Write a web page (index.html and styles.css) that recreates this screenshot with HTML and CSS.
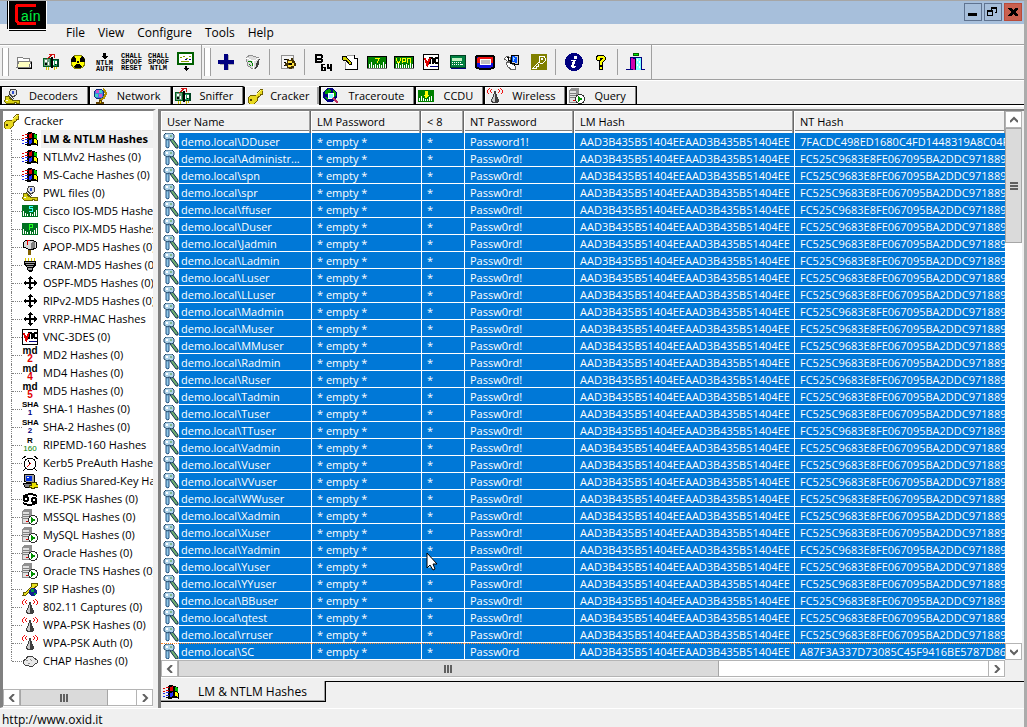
FILE: index.html
```html
<!DOCTYPE html>
<html lang="en">
<head>
<meta charset="UTF-8">
<meta name="viewport" content="width=device-width, initial-scale=1.0">
<title>Cain</title>
<link rel="stylesheet" href="styles.css">
</head>
<body>

<svg class="sprite" aria-hidden="true">
  <symbol id="i-folder" viewBox="0 0 16 16"><path d="M1 13V4l1-1h4l1 1h6v3h2l1 6z" fill="#fff" stroke="#808080"/><path d="M3 7h12l-2 6H1z" fill="#ffffc0" stroke="#808080"/><path d="M2 14h13V8" fill="none" stroke="#000"/></symbol>
  <symbol id="i-sniffer" viewBox="0 0 16 16"><path d="M0 4h8v9H0z" fill="#006020"/><path d="M8 5h8v8H8z" fill="#004020"/><path d="M1 5h6v7H1z" fill="#70a080"/><path d="M9 6h5v6H9z" fill="#20a060"/><path d="M2 6h2v2H2zM5 8h1v3H5zM10 7h1v4h-1zM12 7h2v3h-2z" fill="#fff"/><path d="M2 9h2v2H2zM12 10h1v1h-1z"/><path d="M8 3h2v11H8z"/><path d="M3 13h1v3H3zM5 13h1v3H5zM11 13h1v3h-1zM13 13h1v2h-1z" fill="#d0c000"/><path d="M4 5l6-5M6 0h5v4" fill="none" stroke="#d01010" stroke-width="1"/></symbol>
  <symbol id="i-nuke" viewBox="0 0 16 16"><circle cx="8" cy="8" r="7" fill="#ff0" stroke="#808000"/><path d="M8 8L4 13q4 3 8 0zM8 8l7 0q0-4-3-6zM8 8H1q0-4 3-6z" fill="#000"/><circle cx="8" cy="8" r="2" fill="#000" stroke="#ff0"/></symbol>
  <symbol id="i-export" viewBox="0 0 18 20"><path d="M1 1h15v11H1z" fill="#fff" stroke="#006000" stroke-width="2"/><path d="M3 5h2M6 4h2M9 6h2M12 4h2M4 9h8" stroke="#80a000"/><path d="M8 7h2M12 7h2" stroke="#000080"/><path d="M8 14h2v2h2l-3 3-3-3h2z"/></symbol>
  <symbol id="i-plus" viewBox="0 0 16 16"><path d="M7 1h4v6h5v4h-5v5H7v-5H2V7h5z" fill="#b0b0b0"/><path d="M6 0h4v6h6v4h-6v6H6v-6H0V6h6z" fill="#000080"/></symbol>
  <symbol id="i-bin" viewBox="0 0 16 16"><path d="M1 4l4-3 9 3-2 9-4 2-5-3z" fill="#dcdcdc" stroke="#909090"/><path d="M1 4l8 3 5-3M9 7l-1 8" fill="none" stroke="#fff"/><path d="M12 7l3-3-2 9-3 2z" fill="#404040"/><path d="M3 8l3-1 1 2M8 9l-1 3M6 12L4 10" fill="none" stroke="#008000"/></symbol>
  <symbol id="i-report" viewBox="0 0 16 16"><path d="M1 1h12v13H1z" fill="#f4f4f4" stroke="#909090"/><path d="M4 5h3M4 8h2M4 11h2" stroke="#000"/><path d="M7 5h2v1h2V4h2v2l2 1v2h1v3h-2v2h-2v1H9v-1H7v-2H5V9h2z" fill="#403000"/><path d="M8 7h4v2h2v3h-3v1H8v-2h1z" fill="#ffe040"/><path d="M9 9h3v2H9z"/></symbol>
  <symbol id="i-b64" viewBox="0 0 18 18"><path d="M1 1h7v1h1v3H8v1h1v3H8v1H1zM3 3v2h4V3zM3 7v1h4V7z" fill-rule="evenodd"/><path d="M7 11h4v1H9v2h3v4H7zM9 15v2h1v-2zM13 11h2v3h1v-3h2v7h-2v-2h-3z" fill-rule="evenodd"/></symbol>
  <symbol id="i-keydoc" viewBox="0 0 16 16"><path d="M4 1h8l3 3v12H3V8z" fill="#fff"/><path d="M5 1h7M3 8v7" stroke="#a0a0a0"/><path d="M12 1v3h3v11H3" fill="none" stroke="#000"/><path d="M0 2h4l1 2 4 4v2H7L4 6H1z" fill="#d0d000" stroke="#000"/></symbol>
  <symbol id="i-vu" viewBox="0 0 20 13"><path d="M0 0h20v13H0z"/><path d="M1 1h18v11H1z" fill="#008000"/><path d="M2 12V8h1v4zM4 12V6h1v6zM6 12V9h1v3zM8 12V8h1v4zM10 12V9h1v3zM12 12V8h1v4zM14 12V9h1v3zM16 12V6h1v6zM18 12V8h1v4z" fill="#fff"/></symbol>
  <symbol id="i-cisco7" viewBox="0 0 20 13"><use href="#i-vu"/><path d="M8 2h5v1h-1v2h-1v2h-1V5h1V3H8z" fill="#ff0"/></symbol>
  <symbol id="i-vpn" viewBox="0 0 20 13"><use href="#i-vu"/><path d="M2 2h1v3h1v1h1V5h1V2h1v3H6v2H3V5H2zM8 7V2h4v4H9v1zM9 3v2h2V3zM13 7V2h4v5h-1V3h-2v4z" fill="#ff0" fill-rule="evenodd"/></symbol>
  <symbol id="i-ccdu" viewBox="0 0 16 13"><path d="M0 0h16v12H0z" fill="#008000"/><path d="M1 11V8h1v3zM3 11V6h1v5zM5 11V8h1v3zM7 11V9h1v2zM9 11V9h1v2zM11 11V7h1v4zM13 11V6h1v5z" fill="#fff"/><path d="M7 1h3v4h2L8 9 5 5h2z" fill="#ff0"/></symbol>
  <symbol id="i-vnc" viewBox="0 0 16 16"><path d="M0 0h16v16H0z"/><path d="M1 1h14v14H1z" fill="#fff"/><path d="M7 3h3v1h1v6H9V5H8v5H6V3zM12 3h3v2h-2v3h2v2h-3l-1-1V4z"/><path d="M1 4h2l1 4 2-4h2l-3 9H4z" fill="#e00000"/><path d="M7 12h8v1H7z" fill="#000080"/></symbol>
  <symbol id="i-calc" viewBox="0 0 16 13"><path d="M1 1h15v12H1z" fill="#000080"/><path d="M0 0h15v12H0z" fill="#008040" stroke="#004020"/><path d="M2 2h10v3H2z" fill="#c0f0c0"/><path d="M2 7h1M4 7h1M6 7h1M8 7h1M10 7h1M2 9h1M4 9h1M6 9h1M8 9h1M10 9h3" stroke="#fff"/></symbol>
  <symbol id="i-token" viewBox="0 0 20 15"><rect width="20" height="15" rx="4"/><rect x="2" y="2" width="16" height="11" rx="2" fill="#1010e0"/><path d="M2 8V4l2-2h13l1 2v4z" fill="#f01010"/><path d="M5 5h10v5H5z" fill="#c0c0c0" stroke="#fff"/></symbol>
  <symbol id="i-radius" viewBox="0 0 16 16"><path d="M2 1h8l2 1v7H4L2 8z" fill="#a0a0a0" stroke="#000"/><path d="M4 3h6v5H4z" fill="#0030e0"/><path d="M5 4h2v1H5z" fill="#fff"/><path d="M1 10h10l2 4H3z" fill="#808080" stroke="#000"/><path d="M9 9h5v2h2v3h-4v1H9v-1H7v-2h2z" fill="#e8e000" stroke="#404000"/></symbol>
  <symbol id="i-pc" viewBox="0 0 16 16"><path d="M7 1l8 1-1 9-7-1z" fill="#d0d0d0" stroke="#000"/><path d="M8 2l5 1v6l-5-1z" fill="#0050ff"/><path d="M9 3l2 1-1 3H9z" fill="#a0e0ff"/><path d="M0 5l3-3 4 2-2 4zM2 9l4-1 5 4 1 3-4 1-4-3z" fill="#fff" stroke="#606060"/><path d="M3 3h1v3h2v3h4v3" fill="none" stroke="#000"/></symbol>
  <symbol id="i-olive" viewBox="0 0 16 16"><path d="M0 0h16v16H0z" fill="#808000"/><path d="M9 2h4l1 2v3l-2 2H9L8 7V4zM8 8l-6 6h3v-2h2v-2" fill="none" stroke="#fff"/><path d="M10 4h2v2h-2z" fill="#fff"/></symbol>
  <symbol id="i-info" viewBox="0 0 18 18"><circle cx="9" cy="9" r="9" fill="#000080"/><path d="M9 3h3v3H9zM6 7h5l-2 6h2v1l-2 1H7l-1-1 2-6H6z" fill="#fff"/></symbol>
  <symbol id="i-help" viewBox="0 0 12 16"><path d="M1 4l2-3h5l2 2v3L7 9v2H4V8l3-3V4H5v2H2z" fill="#ff0" stroke="#000"/><path d="M4 12h3v3H4z" fill="#ff0" stroke="#000"/></symbol>
  <symbol id="i-exit" viewBox="0 0 20 18"><path d="M7 0h6v3H7z" fill="#006000"/><path d="M8 1h4v1H8z" fill="#00f000"/><path d="M4 4h12v13H4z" fill="#000080"/><path d="M5 5l4 1v11l-4-1z" fill="#d000b0"/><path d="M9 6h1v10H9z"/><path d="M10 5h5v12h-5z" fill="#80ffff"/><path d="M11 6h1v2h-1zM13 8h1v2h-1zM11 11h1v2h-1zM13 13h1v2h-1z" fill="#fff"/><path d="M0 16h5v1H0zM15 16h4v1h-4z" fill="#000080"/></symbol>
  <symbol id="i-pwl" viewBox="0 0 16 16"><path d="M5 5l2-4h4l2 2-1 4-3 2-3-2z" fill="#e0e0e0" stroke="#404040"/><path d="M8 3h2v3H8z" fill="#3050d0"/><path d="M5 5l5 6M4 7l5 5" stroke="#404040"/><path d="M2 8h3v2l3 2h7v3h-3v-1h-2v1H2l-2-2 1-1z" fill="#d8d010" stroke="#706800"/><path d="M2 12h2v1H2z" fill="#fff"/></symbol>
  <symbol id="i-globe" viewBox="0 0 16 16"><circle cx="7" cy="6" r="5" fill="#4080e0" stroke="#103080"/><path d="M4 2h3v3H4zM7 6h3v3H7z" fill="#d050d0"/><path d="M7 2h3v3H7zM3 6h3v3H3z" fill="#40d0c0"/><path d="M11 1q4 3 2 7t-6 4" fill="none" stroke="#b09000" stroke-width="2"/><path d="M7 12h2v2h2v1H4v-1h3z" fill="#e0c000" stroke="#604000"/></symbol>
  <symbol id="i-key" viewBox="0 0 16 16"><path d="M9 7l5-6h2v2l-1 1v2h-2v2l-3 2v3l-3 3H3l-2-2v-4l2-2z" fill="#e8d820" stroke="#706000"/><path d="M9 7l5-5" stroke="#ffff90"/><path d="M3 11h2v2H3z" fill="#504000"/></symbol>
  <symbol id="i-trace" viewBox="0 0 16 16"><circle cx="7" cy="7" r="7" fill="#000080"/><path d="M2 3l4-2 2 2-2 3H2zM10 2l3 2v4l-3 1zM2 9l3 1v3z" fill="#00a000"/><circle cx="8" cy="8" r="3" fill="#80ffff" stroke="#fff"/><path d="M10 10l5 5" stroke="#c03060" stroke-width="2"/></symbol>
  <symbol id="i-wifi" viewBox="0 0 16 16"><path d="M2 0h1v1H2zM1 1h1v1H1zM0 2h1v3H0zM1 5h1v1H1zM4 1h1v1H4zM3 2h1v2H3zM4 4h1v1H4zM13 0h1v1h-1zM14 1h1v1h-1zM15 2h1v3h-1zM14 5h1v1h-1zM11 1h1v1h-1zM12 2h1v2h-1zM11 4h1v1h-1z" fill="#f01010"/><path d="M7 3h2v3h1v3h1v2h1v3h-1v1H5v-1H4v-3h1V9h1V6h1z" fill="#404040"/><path d="M7 6h1v3H7zM6 9h2v5H6zM5 11h1v2H5z" fill="#c8c8c8"/></symbol>
  <symbol id="i-server" viewBox="0 0 16 16"><path d="M0 2l3-2h6l1 1v12l-2 2H0z" fill="#909090"/><path d="M1 3h6v11H1z" fill="#e0e0e0"/><path d="M1 5h6M1 7h6M1 9h6" stroke="#808080"/><path d="M4 12h2v1H4z" fill="#e00000"/><circle cx="11" cy="11" r="5" fill="#303030"/><circle cx="11" cy="11" r="4" fill="#fff"/><path d="M9 8l5 3-5 3z" fill="#009000"/></symbol>
  <symbol id="i-win" viewBox="0 0 16 16"><path d="M5 3q3-4 6-1l4 1 1 12q-3-2-5-1t-6 1z"/><path d="M7 3l3-1v5H7z" fill="#e00000"/><path d="M12 3l3 1v4l-3-1z" fill="#00c000"/><path d="M7 9l3-1v4l-3 1z" fill="#2030ff"/><path d="M12 8l3 1v4l-3-1z" fill="#ff0"/><path d="M0 4h2v1H0zM3 3h3v1H3zM0 7h2v1H0zM3 6h3v1H3z" fill="#e00000"/><path d="M0 9h2v1H0zM3 8h3v1H3zM0 12h2v1H0zM3 11h3v1H3z" fill="#2030f0"/><path d="M3 13h3v1H3z"/></symbol>
  <symbol id="i-cs" viewBox="0 0 16 12"><path d="M0 0h16v12H0z" fill="#007020"/><path d="M1 11V6h1v5zM3 11V8h1v3zM5 11V9h1v2zM8 11V8h1v3zM10 11V9h1v2zM12 11V7h1v4zM14 11V5h1v6z" fill="#fff"/><path d="M7 1h4v1H8v1h3v4H7V6h3V4H7z" fill="#40ffff"/></symbol>
  <symbol id="i-cp" viewBox="0 0 16 12"><path d="M0 0h16v12H0z" fill="#007020"/><path d="M1 11V6h1v5zM3 11V8h1v3zM5 11V9h1v2zM8 11V8h1v3zM10 11V9h1v2zM12 11V7h1v4zM14 11V5h1v6z" fill="#fff"/><path d="M7 7V1h4v4H8v2zM8 2v2h2V2z" fill="#20ff20" fill-rule="evenodd"/></symbol>
  <symbol id="i-mail" viewBox="0 0 16 16"><path d="M6 10h3v6H6z" fill="#806000"/><path d="M1 4l2-2 7-1 4 2v6l-5 2-8-3z" fill="#d8d8d8" stroke="#000"/><path d="M9 4l2-2 2 2v5l-4 1z" fill="#808080"/><path d="M5 1h3v1H6v4H5z" fill="#e00000"/></symbol>
  <symbol id="i-cram" viewBox="0 0 16 16"><path d="M2 4h12v4l-3 3v2l-2 2H7l-2-2v-2L2 8z"/><path d="M3 5h10v1H3zM4 7h8v1H4zM5 9h6v1H5zM6 11h4v2H6z" fill="#a0a0a0"/><path d="M3 1h1v3H3zM6 1h1v3H6zM9 1h1v3H9zM12 1h1v3h-1z" fill="#d8c800"/></symbol>
  <symbol id="i-cross" viewBox="0 0 16 16"><path d="M8 1l3 3H9v3h3V5l3 3-3 3V9H9v3h2l-3 3-3-3h2V9H4v2L1 8l3-3v2h3V4H5z"/></symbol>
  <symbol id="i-clock" viewBox="0 0 16 16"><circle cx="8" cy="9" r="6" fill="#fff" stroke="#000"/><path d="M0 4l4-3M12 1l4 3M3 14l-2 2M13 14l2 2" stroke="#000"/><path d="M8 9L6 5" stroke="#000"/><path d="M9 8l-4 4" stroke="#e00000"/></symbol>
  <symbol id="i-ike" viewBox="0 0 16 16"><path d="M15 5Q10 2 4 4L1 6M1 12q5 3 11 1l3-2" fill="none" stroke="#000" stroke-width="2"/><circle cx="4" cy="8" r="2" fill="none" stroke="#000" stroke-width="2"/><circle cx="12" cy="9" r="2" fill="none" stroke="#000" stroke-width="2"/></symbol>
  <symbol id="i-sip" viewBox="0 0 16 16"><path d="M1 14l1-3h2l5-5V4l1-2h5v3l-3 2-6 5-2 2z" fill="#e8e020" stroke="#605800"/><circle cx="11" cy="11" r="4" fill="#102090"/><path d="M9 8h3v3H9zM12 12h2v2h-2z" fill="#00a040"/></symbol>
  <symbol id="i-cloud" viewBox="0 0 16 16"><path d="M3 12L1 10V8l3-2 2-3h4l2 2 3 2v3l-2 1-2 2H7l-2-1z" fill="#e8e8e8" stroke="#404040"/><path d="M4 8l2-1M8 6l2 2M6 11l2-1" stroke="#909090"/></symbol>
  <symbol id="i-keys" viewBox="0 0 16 16"><path d="M9 5l6 8v2h-2L7 7z" fill="#70b070" stroke="#103050"/><path d="M4 6h2v8l-1 1-2-1V7z" fill="#90c8e8" stroke="#205080"/><path d="M1 2l2-2h6l2 2v3L9 7 6 6 4 7 1 5z" fill="#b0d4ea" stroke="#1c4468"/><path d="M3 2h2v2H3z" fill="#fff"/><path d="M7 2h2v2H7z" fill="#80b890"/></symbol>
</svg>

<header class="titlebar">
  <svg class="logo" viewBox="0 0 40 30" role="img" aria-label="Cain"><path d="M0 0h40v28l-2 2H2l-2-2z"/><path d="M1 0v28h38V0" fill="none" stroke="#fff"/><path d="M29 4H11L9 6v13l2 3h18" fill="none" stroke="#f00" stroke-width="3"/><text x="14" y="20">aín</text></svg>
  <div class="window-buttons">
    <button aria-label="Minimize"><svg viewBox="0 0 16 16"><path d="M3 9h9v3H3z"/></svg></button>
    <button aria-label="Restore"><svg viewBox="0 0 16 16"><path d="M6 3h6v6h-2V8h1V5H7v1H6zM2 6h6v6H2zM3 8v3h4V8z" fill-rule="evenodd"/></svg></button>
    <button class="close" aria-label="Close"><svg viewBox="0 0 16 16"><path d="M3 4h3l2 2 2-2h3v1l-3 3 3 3v1h-3l-2-2-2 2H3v-1l3-3-3-3z"/></svg></button>
  </div>
</header>

<nav class="menubar">
  <button>File</button>
  <button>View</button>
  <button>Configure</button>
  <button>Tools</button>
  <button>Help</button>
</nav>

<div class="toolbars">
  <div class="toolbar">
    <button aria-label="Open"><svg class="w16"><use href="#i-folder"/></svg></button>
    <button aria-label="Start sniffer"><svg class="w16"><use href="#i-sniffer"/></svg></button>
    <button aria-label="Start APR"><svg class="w16"><use href="#i-nuke"/></svg></button>
    <button class="glyph"><svg class="arrow" viewBox="0 0 7 6"><path d="M2 0h3v3h2L4 6H3L0 3h2z"/></svg>NTLM<br>AUTH</button>
    <button class="glyph">CHALL<br>SPOOF<br>RESET</button>
    <button class="glyph">CHALL<br>SPOOF<br>NTLM</button>
    <button aria-label="Export"><svg class="w18"><use href="#i-export"/></svg></button>
  </div>
  <div class="toolbar">
    <button aria-label="Add"><svg class="w16"><use href="#i-plus"/></svg></button>
    <button aria-label="Remove"><svg class="w16"><use href="#i-bin"/></svg></button>
    <span class="sep"></span>
    <button aria-label="Settings"><svg class="w16"><use href="#i-report"/></svg></button>
    <span class="sep"></span>
    <button aria-label="Base64"><svg class="w18"><use href="#i-b64"/></svg></button>
    <button aria-label="Access database"><svg class="w16"><use href="#i-keydoc"/></svg></button>
    <button aria-label="Cisco type-7"><svg class="w20"><use href="#i-cisco7"/></svg></button>
    <button aria-label="Cisco VPN"><svg class="w20"><use href="#i-vpn"/></svg></button>
    <button aria-label="VNC"><svg class="w16"><use href="#i-vnc"/></svg></button>
    <button aria-label="Hash calculator"><svg class="w16"><use href="#i-calc"/></svg></button>
    <button aria-label="Token"><svg class="w20"><use href="#i-token"/></svg></button>
    <button aria-label="Remote desktop"><svg class="w16"><use href="#i-pc"/></svg></button>
    <button aria-label="Syskey"><svg class="w16"><use href="#i-olive"/></svg></button>
    <span class="sep"></span>
    <button aria-label="About"><svg class="w18"><use href="#i-info"/></svg></button>
    <button aria-label="Help topics"><svg class="w12"><use href="#i-help"/></svg></button>
    <span class="sep"></span>
    <button aria-label="Exit"><svg class="w20"><use href="#i-exit"/></svg></button>
  </div>
</div>

<nav class="tabs">
  <button><svg class="w16"><use href="#i-pwl"/></svg><span>Decoders</span></button>
  <button><svg class="w16"><use href="#i-globe"/></svg><span>Network</span></button>
  <button><svg class="w16"><use href="#i-sniffer"/></svg><span>Sniffer</span></button>
  <button class="active"><svg class="w16"><use href="#i-key"/></svg><span>Cracker</span></button>
  <button><svg class="w16"><use href="#i-trace"/></svg><span>Traceroute</span></button>
  <button><svg class="w16"><use href="#i-ccdu"/></svg><span>CCDU</span></button>
  <button><svg class="w16"><use href="#i-wifi"/></svg><span>Wireless</span></button>
  <button><svg class="w16"><use href="#i-server"/></svg><span>Query</span></button>
</nav>

<main class="content">
  <aside class="side">
    <div class="tree-root"><svg class="w16"><use href="#i-key"/></svg><span>Cracker</span></div>
    <ul class="tree" id="tree"></ul>
    <div class="hscroll">
      <button aria-label="Scroll left"><svg viewBox="0 0 8 8"><path d="M6 0L2 4l4 4"/></svg></button>
      <div class="thumb side-thumb"></div>
      <div class="track"></div>
      <button aria-label="Scroll right"><svg viewBox="0 0 8 8"><path d="M2 0l4 4-4 4"/></svg></button>
    </div>
  </aside>

  <section class="main">
    <div class="list">
      <div class="list-view">
        <table>
          <colgroup><col class="c-user"><col class="c-lm"><col class="c-lt8"><col class="c-nt"><col class="c-lmhash"><col></colgroup>
          <thead>
            <tr><th>User Name</th><th>LM Password</th><th>&lt; 8</th><th>NT Password</th><th>LM Hash</th><th>NT Hash</th></tr>
          </thead>
          <tbody id="rows"></tbody>
        </table>
        <svg class="pointer" viewBox="0 0 12 19"><path d="M1 1v15l3-3 3 5 2-1-2-5h4z" fill="#fff" stroke="#000"/></svg>
      </div>
      <div class="vscroll">
        <button aria-label="Scroll up"><svg viewBox="0 0 8 8"><path d="M0 6l4-4 4 4"/></svg></button>
        <div class="thumb"></div>
        <div class="track"></div>
        <button aria-label="Scroll down"><svg viewBox="0 0 8 8"><path d="M0 2l4 4 4-4"/></svg></button>
      </div>
    </div>
    <div class="hscroll">
      <button aria-label="Scroll left"><svg viewBox="0 0 8 8"><path d="M6 0L2 4l4 4"/></svg></button>
      <div class="thumb list-thumb"></div>
      <div class="track"></div>
      <button aria-label="Scroll right"><svg viewBox="0 0 8 8"><path d="M2 0l4 4-4 4"/></svg></button>
      <span class="corner"></span>
    </div>
    <div class="sheets">
      <button><svg class="w16"><use href="#i-win"/></svg><span>LM &amp; NTLM Hashes</span></button>
      <div class="sheets-rest"></div>
    </div>
  </section>
</main>

<footer class="status">http://www.oxid.it</footer>

<script>
  // [icon, label, icon text top, icon text bottom, bottom colour class]
  const tree = [
    ['win', 'LM & NTLM Hashes'],
    ['win', 'NTLMv2 Hashes (0)'],
    ['win', 'MS-Cache Hashes (0)'],
    ['pwl', 'PWL files (0)'],
    ['cs', 'Cisco IOS-MD5 Hashes'],
    ['cp', 'Cisco PIX-MD5 Hashes'],
    ['mail', 'APOP-MD5 Hashes (0)'],
    ['cram', 'CRAM-MD5 Hashes (0)'],
    ['cross', 'OSPF-MD5 Hashes (0)'],
    ['cross', 'RIPv2-MD5 Hashes (0)'],
    ['cross', 'VRRP-HMAC Hashes'],
    ['vnc', 'VNC-3DES (0)'],
    ['', 'MD2 Hashes (0)', 'md', '2', 'red'],
    ['', 'MD4 Hashes (0)', 'md', '4', 'red'],
    ['', 'MD5 Hashes (0)', 'md', '5', 'red'],
    ['', 'SHA-1 Hashes (0)', 'SHA', '1', 'navy'],
    ['', 'SHA-2 Hashes (0)', 'SHA', '2', 'navy'],
    ['', 'RIPEMD-160 Hashes', 'R', '160', 'green'],
    ['clock', 'Kerb5 PreAuth Hashes'],
    ['radius', 'Radius Shared-Key Hashes'],
    ['ike', 'IKE-PSK Hashes (0)'],
    ['server', 'MSSQL Hashes (0)'],
    ['server', 'MySQL Hashes (0)'],
    ['server', 'Oracle Hashes (0)'],
    ['server', 'Oracle TNS Hashes (0)'],
    ['sip', 'SIP Hashes (0)'],
    ['wifi', '802.11 Captures (0)'],
    ['wifi', 'WPA-PSK Hashes (0)'],
    ['wifi', 'WPA-PSK Auth (0)'],
    ['cloud', 'CHAP Hashes (0)']
  ];

  const users = ['DDuser', 'Administr...', 'spn', 'spr', 'ffuser', 'Duser', 'Jadmin', 'Ladmin', 'Luser', 'LLuser',
    'Madmin', 'Muser', 'MMuser', 'Radmin', 'Ruser', 'Tadmin', 'Tuser', 'TTuser', 'Vadmin', 'Vuser', 'VVuser',
    'WWuser', 'Xadmin', 'Xuser', 'Yadmin', 'Yuser', 'YYuser', 'BBuser', 'qtest', 'rruser', 'SC'];

  // accounts that don't use the common password
  const other = {
    DDuser: ['Password1!', '7FACDC498ED1680C4FD1448319A8C04F'],
    SC: ['Passw0rd', 'A87F3A337D73085C45F9416BE5787D86']
  };

  document.getElementById('tree').innerHTML = tree.map(([icon, label, top, bottom, color], i) => {
    const pic = icon
      ? `<svg class="w16"><use href="#i-${icon}"/></svg>`
      : `<span class="algo ${top}"><b>${top}</b><b class="${color}">${bottom}</b></span>`;
    return `<li${i === 0 ? ' class="current"' : ''}>${pic}<span class="label">${label.replace('&', '&amp;')}</span></li>`;
  }).join('');

  document.getElementById('rows').innerHTML = users.map(u => {
    const [pass, hash] = other[u] || ['Passw0rd!', 'FC525C9683E8FE067095BA2DDC971889'];
    return `<tr><td><div class="user"><svg class="w16"><use href="#i-keys"/></svg><span>demo.local\\${u}</span></div></td>
      <td>* empty *</td><td>*</td><td>${pass}</td><td>AAD3B435B51404EEAAD3B435B51404EE</td><td>${hash}</td></tr>`;
  }).join('');
</script>
</body>
</html>
```
FILE: styles.css
```css
* {
  box-sizing: border-box;
}

body {
  margin: 0;
  min-height: 100vh;
  display: flex;
  flex-direction: column;
  border-top: 1px solid #a6a6a6;
  border-right: 3px solid #ababab;
  background: #f0f0f0;
  color: #000;
  font-family: "Open Sans", "Noto Sans", sans-serif;
  font-size: 12px;
  line-height: 16px;
}

button {
  font: inherit;
  color: inherit;
  background: none;
  border: 0;
  padding: 0;
  margin: 0;
}

svg {
  display: block;
  flex: none;
  shape-rendering: crispEdges;
}

.sprite {
  position: absolute;
  width: 0;
  height: 0;
}

.w12 { width: 12px; height: 16px; }
.w16 { width: 16px; height: 16px; }
.w18 { width: 18px; height: 20px; }
.w20 { width: 20px; height: 18px; }

/* title bar */
.titlebar {
  position: relative;
  height: 23px;
  background: #a7bfdb;
  display: flex;
  justify-content: flex-end;
  padding: 2px 2px 0 0;
}

.logo {
  position: absolute;
  left: 7px;
  top: 0;
  width: 40px;
  height: 30px;
}

.logo text {
  fill: #00f040;
  font: 14px "Liberation Sans", sans-serif;
}

.window-buttons {
  display: flex;
  gap: 2px;
}

.window-buttons button {
  width: 18px;
  height: 18px;
  border: 1px solid #5f7390;
}

.window-buttons .close {
  background: #c9604f;
  border-color: #b84a3a;
}

/* menu */
.menubar {
  height: 20px;
  display: flex;
  gap: 13px;
  padding: 0 0 2px 66px;
}

/* toolbars */
.toolbars {
  height: 35px;
  display: flex;
  border-top: 1px solid #a0a0a0;
  box-shadow: inset 0 1px #fff;
}

.toolbar {
  display: flex;
  align-items: center;
  padding: 0 2px;
  border-right: 1px solid #a0a0a0;
}

.toolbar::before {
  content: "";
  width: 5px;
  height: 28px;
  margin-right: 1px;
  border: solid #a0a0a0;
  border-width: 0 1px;
  background: #fff;
}

.toolbar button {
  width: 27px;
  height: 30px;
  display: flex;
  align-items: center;
  justify-content: center;
}

.toolbar .glyph {
  display: block;
  font: bold 7px/6px "Liberation Mono", monospace;
}

.arrow {
  width: 7px;
  height: 6px;
  margin: 0 auto 1px;
}

.sep {
  width: 1px;
  height: 26px;
  margin: 0 4px 0 3px;
  background: #a0a0a0;
}

/* section tabs */
.tabs {
  height: 28px;
  display: flex;
  padding-top: 6px;
  border-top: 1px solid #a0a0a0;
  border-bottom: 2px solid #fff;
  box-shadow: inset 0 1px #fff;
  font-size: 11px;
}

.tabs::after {
  content: "";
  flex: 1;
  border-bottom: 1px solid #000;
}

.tabs button {
  display: flex;
  align-items: center;
  gap: 9px;
  padding: 0 10px 0 2px;
  border: solid #000;
  border-width: 1px 0 1px 2px;
  box-shadow: inset -1px 0 #808080, inset 1px 1px #fff;
}

.tabs button:last-child {
  border-right-width: 1px;
}

.tabs .active {
  gap: 7px;
  border-top-color: #fff;
  border-bottom-color: #f0f0f0;
  box-shadow: inset -2px 0 #a0a0a0, inset 1px 0 #fff;
}

/* body of the window */
.content {
  flex: 1;
  display: flex;
  min-height: 0;
  padding-top: 2px;
  border-bottom: 1px solid #fff;
}

.side {
  width: 156px;
  flex: none;
  display: flex;
  flex-direction: column;
  background: #fff;
  border: solid #808080;
  border-width: 2px 3px 1px 3px;
  border-right-color: #f0f0f0;
  border-bottom-color: #f0f0f0;
  font-size: 11px;
  overflow: hidden;
}

.tree-root {
  display: flex;
  align-items: center;
  gap: 5px;
  height: 19px;
}

.tree {
  list-style: none;
  margin: 0 0 auto 8px;
  padding: 0;
}

.tree li {
  position: relative;
  display: flex;
  align-items: center;
  height: 18px;
  padding-left: 10px;
  border-left: 1px dotted #808080;
  white-space: nowrap;
}

.tree li:last-child {
  border-left-color: transparent;
}

.tree li::before {
  content: "";
  position: absolute;
  left: 0;
  top: 9px;
  width: 10px;
  border-top: 1px dotted #808080;
}

.tree li:last-child::after {
  content: "";
  position: absolute;
  left: -1px;
  top: 0;
  height: 9px;
  border-left: 1px dotted #808080;
}

.label {
  flex: 1;
  margin-left: 3px;
  padding: 0 2px;
  line-height: 18px;
}

.current .label {
  background: #f0f0f0;
  font-weight: bold;
}

.algo {
  width: 16px;
  text-align: center;
  font: 8px/8px "Liberation Sans", sans-serif;
}

.algo.md {
  font-size: 10px;
}

.algo b {
  display: block;
}

.red { color: #e00000; }
.navy { color: #000080; }

.algo .green {
  color: #008000;
  font-weight: normal;
}

/* scroll bars */
.hscroll {
  display: flex;
  height: 18px;
  background: #fff;
}

.vscroll {
  display: flex;
  flex-direction: column;
  width: 17px;
  background: #fff;
}

.hscroll button,
.vscroll button {
  display: flex;
  align-items: center;
  justify-content: center;
  width: 17px;
  height: 17px;
  border: 1px solid #b4b4b4;
  background: #fff;
}

.hscroll button svg,
.vscroll button svg {
  width: 8px;
  height: 8px;
  fill: none;
  stroke: #606060;
  stroke-width: 2;
  shape-rendering: auto;
}

.thumb {
  display: flex;
  align-items: center;
  justify-content: center;
  background: #dadada;
  border: 1px solid #a6a6a6;
}

.thumb::before {
  content: "";
  width: 8px;
  height: 8px;
  background: repeating-linear-gradient(90deg, #606060 0 2px, transparent 2px 3px);
}

.vscroll .thumb {
  height: 115px;
}

.vscroll .thumb::before {
  background: repeating-linear-gradient(#606060 0 2px, transparent 2px 3px);
}

.track {
  flex: 1;
}

.hscroll .track,
.hscroll .thumb {
  height: 17px;
  border-top: 1px solid #b4b4b4;
  border-bottom: 1px solid #b4b4b4;
}

.side-thumb { flex: 3; }
.list-thumb { flex: 2; }

.corner {
  width: 19px;
  background: #f0f0f0;
}

/* account list */
.main {
  flex: 1;
  min-width: 0;
  display: flex;
  flex-direction: column;
  margin-left: 2px;
  border: solid #808080;
  border-width: 2px 0 0 3px;
}

.list {
  display: flex;
  padding-right: 2px;
}

.list-view {
  position: relative;
  flex: 1;
  min-width: 0;
  overflow: hidden;
  background: #fff;
}

table {
  width: 100%;
  table-layout: fixed;
  border-collapse: separate;
  border-spacing: 0;
  font-size: 11px;
}

.c-user { width: 150px; }
.c-lm { width: 110px; }
.c-lt8 { width: 43px; }
.c-nt { width: 110px; }
.c-lmhash { width: 220px; }

th {
  height: 22px;
  padding: 0 0 0 6px;
  text-align: left;
  font-weight: normal;
  background: linear-gradient(#f0f0f0 19px, #808080 19px 20px, #fff 20px);
  border-right: 1px solid #696969;
  box-shadow: inset -1px 0 #a0a0a0, inset 1px 1px #fff;
}

th:last-child {
  border-right: 0;
}

td {
  height: 17px;
  padding: 1px 0 0 5px;
  line-height: 15px;
  color: #fff;
  background: #0078d7;
  border-bottom: 1px solid #fff;
  border-left: 1px solid #fff;
  white-space: nowrap;
  overflow: hidden;
}

td:first-child {
  padding: 0;
  border-left: 0;
  background: linear-gradient(90deg, #fff 18px, #0078d7 18px);
}

.user {
  display: flex;
  gap: 2px;
  height: 16px;
  padding-left: 2px;
  line-height: 17px;
}

.user svg {
  shape-rendering: auto;
}

/* focused row */
tr:last-child td {
  padding-top: 0;
  border-top: 1px dotted #ff8728;
}

tr:last-child .user {
  height: 15px;
  line-height: 15px;
}

.pointer {
  position: absolute;
  left: 265px;
  top: 441px;
  width: 12px;
  height: 19px;
  shape-rendering: auto;
}

/* sheet tabs */
.sheets {
  flex: 1;
  display: flex;
  align-items: flex-start;
  padding-top: 3px;
}

.sheets button {
  display: flex;
  align-items: center;
  gap: 19px;
  height: 21px;
  padding: 1px 18px 0 2px;
  border: solid #000;
  border-width: 0 1px 1px 0;
  box-shadow: inset -1px -1px #a0a0a0;
}

.sheets-rest {
  flex: 1;
  border-top: 1px solid #000;
}

/* status line */
.status {
  height: 18px;
  padding: 3px 2px 0;
}
```
